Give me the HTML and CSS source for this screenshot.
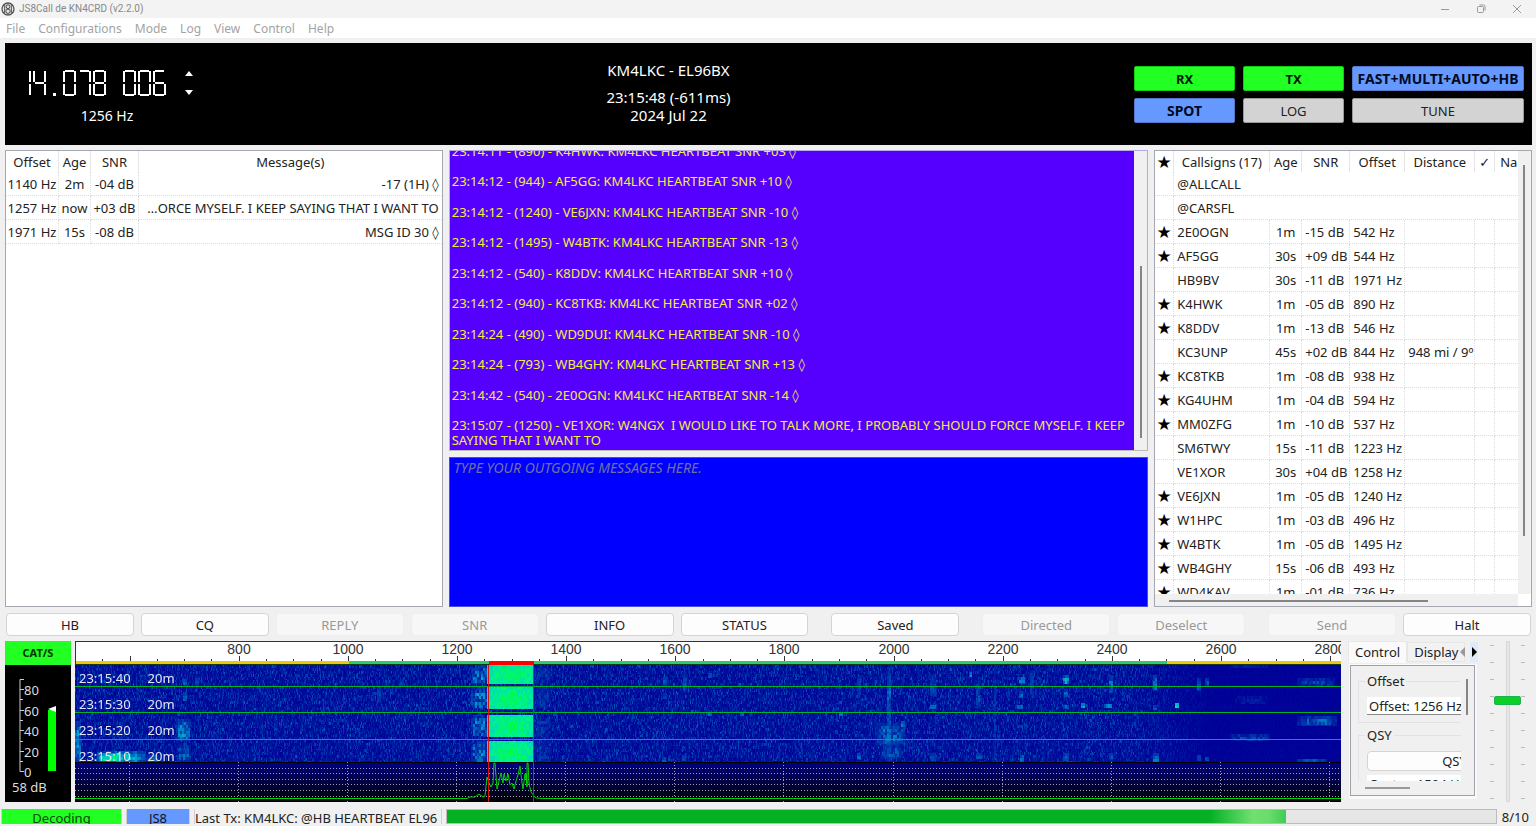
FILE: index.html
```html
<!DOCTYPE html>
<html lang="en">
<head>
<meta charset="utf-8">
<title>JS8Call de KN4CRD (v2.2.0)</title>
<link rel="stylesheet" href="styles.css">
</head>
<body>
<header class="titlebar">
  <svg class="logo" width="14" height="14" viewBox="0 0 14 14" aria-hidden="true"><circle cx="7" cy="7" r="6" fill="#e4e4e4" stroke="#555" stroke-width="1.3"/><circle cx="7" cy="4.7" r="1.9" fill="none" stroke="#444"/><circle cx="7" cy="9.2" r="2.2" fill="none" stroke="#444"/><path d="M3.6 3v8M10.4 3v8" stroke="#666" stroke-width="1.1"/></svg>
  <h1>JS8Call de KN4CRD (v2.2.0)</h1>
  <div class="window-buttons">
    <button aria-label="Minimize"><svg width="10" height="10" viewBox="0 0 10 10"><path d="M1 5.5h8"/></svg></button>
    <button aria-label="Restore"><svg width="10" height="10" viewBox="0 0 10 10"><rect x="1.5" y="2.5" width="6" height="6" rx="1"/><path d="M3.5 1h4q1.500 0 1.500 1.500v4"/></svg></button>
    <button aria-label="Close"><svg width="10" height="10" viewBox="0 0 10 10"><path d="M1 1l8 8M9 1l-8 8"/></svg></button>
  </div>
</header>
<nav class="menubar">
  <button>File</button><button>Configurations</button><button>Mode</button><button>Log</button><button>View</button><button>Control</button><button>Help</button>
</nav>

<section class="station">
  <div class="dial">
    <div class="dial-row">
      <output class="lcd"><span class="seg n1">1</span><span class="seg n4">4</span><span class="seg dot">.</span><span class="seg n0">0</span><span class="seg n7">7</span><span class="seg n8">8</span><span class="seg"> </span><span class="seg n0">0</span><span class="seg n0">0</span><span class="seg n6">6</span></output>
      <div class="steps"><button class="up" aria-label="Band up"></button><button class="down" aria-label="Band down"></button></div>
    </div>
    <div class="offset">1256 Hz</div>
  </div>
  <div class="clock">
    <div class="call">KM4LKC - EL96BX</div>
    <div>23:15:48 (-611ms)</div>
    <div>2024 Jul 22</div>
  </div>
  <div class="modes">
    <button class="green">RX</button><button class="green">TX</button><button class="blue">FAST+MULTI+AUTO+HB</button>
    <button class="blue">SPOT</button><button>LOG</button><button>TUNE</button>
  </div>
</section>

<main class="work">
  <section class="pane">
    <table class="grid activity">
      <colgroup><col class="w-off"><col class="w-age"><col class="w-snr"><col></colgroup>
      <thead><tr><th>Offset</th><th>Age</th><th>SNR</th><th>Message(s)</th></tr></thead>
      <tbody>
        <tr><td>1140 Hz</td><td>2m</td><td>-04 dB</td><td>-17 (1H) ◊</td></tr>
        <tr><td>1257 Hz</td><td>now</td><td>+03 dB</td><td>…ORCE MYSELF. I KEEP SAYING THAT I WANT TO</td></tr>
        <tr><td>1971 Hz</td><td>15s</td><td>-08 dB</td><td>MSG ID 30 ◊</td></tr>
      </tbody>
    </table>
  </section>

  <section class="chat">
    <div class="log">
      <div class="log-lines">
        <p>23:14:11 - (890) - K4HWK: KM4LKC HEARTBEAT SNR +03 ◊</p>
        <p>23:14:12 - (944) - AF5GG: KM4LKC HEARTBEAT SNR +10 ◊</p>
        <p>23:14:12 - (1240) - VE6JXN: KM4LKC HEARTBEAT SNR -10 ◊</p>
        <p>23:14:12 - (1495) - W4BTK: KM4LKC HEARTBEAT SNR -13 ◊</p>
        <p>23:14:12 - (540) - K8DDV: KM4LKC HEARTBEAT SNR +10 ◊</p>
        <p>23:14:12 - (940) - KC8TKB: KM4LKC HEARTBEAT SNR +02 ◊</p>
        <p>23:14:24 - (490) - WD9DUI: KM4LKC HEARTBEAT SNR -10 ◊</p>
        <p>23:14:24 - (793) - WB4GHY: KM4LKC HEARTBEAT SNR +13 ◊</p>
        <p>23:14:42 - (540) - 2E0OGN: KM4LKC HEARTBEAT SNR -14 ◊</p>
        <p>23:15:07 - (1250) - VE1XOR: W4NGX&nbsp; I WOULD LIKE TO TALK MORE, I PROBABLY SHOULD FORCE MYSELF. I KEEP SAYING THAT I WANT TO</p>
      </div>
      <div class="log-bar"><span></span></div>
    </div>
    <textarea class="compose" aria-label="Outgoing message" placeholder="TYPE YOUR OUTGOING MESSAGES HERE."></textarea>
  </section>

  <section class="pane heard">
    <div class="heard-view">
      <table class="grid calls">
        <colgroup><col class="w-star"><col class="w-call"><col class="w-age"><col class="w-snr"><col class="w-hz"><col class="w-dist"><col class="w-tick"><col></colgroup>
        <thead><tr><th>★</th><th>Callsigns (17)</th><th>Age</th><th>SNR</th><th>Offset</th><th>Distance</th><th>✓</th><th>Name</th></tr></thead>
        <tbody>
          <tr><td></td><td colspan="7">@ALLCALL</td></tr>
          <tr><td></td><td colspan="7">@CARSFL</td></tr>
          <tr><td>★</td><td>2E0OGN</td><td>1m</td><td>-15 dB</td><td>542 Hz</td><td></td><td></td><td></td></tr>
          <tr><td>★</td><td>AF5GG</td><td>30s</td><td>+09 dB</td><td>544 Hz</td><td></td><td></td><td></td></tr>
          <tr><td></td><td>HB9BV</td><td>30s</td><td>-11 dB</td><td>1971 Hz</td><td></td><td></td><td></td></tr>
          <tr><td>★</td><td>K4HWK</td><td>1m</td><td>-05 dB</td><td>890 Hz</td><td></td><td></td><td></td></tr>
          <tr><td>★</td><td>K8DDV</td><td>1m</td><td>-13 dB</td><td>546 Hz</td><td></td><td></td><td></td></tr>
          <tr><td></td><td>KC3UNP</td><td>45s</td><td>+02 dB</td><td>844 Hz</td><td>948 mi / 9º</td><td></td><td></td></tr>
          <tr><td>★</td><td>KC8TKB</td><td>1m</td><td>-08 dB</td><td>938 Hz</td><td></td><td></td><td></td></tr>
          <tr><td>★</td><td>KG4UHM</td><td>1m</td><td>-04 dB</td><td>594 Hz</td><td></td><td></td><td></td></tr>
          <tr><td>★</td><td>MM0ZFG</td><td>1m</td><td>-10 dB</td><td>537 Hz</td><td></td><td></td><td></td></tr>
          <tr><td></td><td>SM6TWY</td><td>15s</td><td>-11 dB</td><td>1223 Hz</td><td></td><td></td><td></td></tr>
          <tr><td></td><td>VE1XOR</td><td>30s</td><td>+04 dB</td><td>1258 Hz</td><td></td><td></td><td></td></tr>
          <tr><td>★</td><td>VE6JXN</td><td>1m</td><td>-05 dB</td><td>1240 Hz</td><td></td><td></td><td></td></tr>
          <tr><td>★</td><td>W1HPC</td><td>1m</td><td>-03 dB</td><td>496 Hz</td><td></td><td></td><td></td></tr>
          <tr><td>★</td><td>W4BTK</td><td>1m</td><td>-05 dB</td><td>1495 Hz</td><td></td><td></td><td></td></tr>
          <tr><td>★</td><td>WB4GHY</td><td>15s</td><td>-06 dB</td><td>493 Hz</td><td></td><td></td><td></td></tr>
          <tr><td>★</td><td>WD4KAV</td><td>1m</td><td>-01 dB</td><td>736 Hz</td><td></td><td></td><td></td></tr>
        </tbody>
      </table>
    </div>
    <div class="vbar"><span></span></div>
    <div class="hbar"><span></span></div>
  </section>
</main>

<div class="actions">
  <button>HB</button><button>CQ</button><button disabled>REPLY</button><button disabled>SNR</button><button>INFO</button><button>STATUS</button>
  <button class="apart">Saved</button><button class="apart" disabled>Directed</button><button disabled>Deselect</button>
  <button class="apart" disabled>Send</button><button>Halt</button>
</div>

<section class="scope">
  <div class="meter">
    <button class="cat">CAT/S</button>
    <svg class="scale" width="66" height="114" role="img" aria-label="Signal level">
      <path d="M19 14.500h-4v92h4M15 24.500h4M15 34.500h3M15 45.500h4M15 55.500h3M15 65.500h4M15 76.500h3M15 86.500h4M15 96.500h3" fill="none" stroke="#ccc"/>
      <rect x="43" y="45" width="8" height="61" fill="#0f0"/>
      <path d="M51 41v6l-8-3z" fill="#fff"/>
      <g class="scale-text"><text x="19" y="30">80</text><text x="19" y="51">60</text><text x="19" y="71">40</text><text x="19" y="92">20</text><text x="19" y="112">0</text></g>
    </svg>
    <div class="level">58 dB</div>
  </div>

  <div class="plot">
    <svg class="ruler" id="ruler" width="100%" height="24"></svg>
    <div class="fall">
      <canvas id="fall" width="1266" height="137"></canvas>
      <div class="stamps">
        <div><span>23:15:40</span><span>20m</span></div>
        <div><span>23:15:30</span><span>20m</span></div>
        <div><span>23:15:20</span><span>20m</span></div>
        <div><span>23:15:10</span><span>20m</span></div>
      </div>
    </div>
  </div>

  <div class="side">
    <div class="tabs"><button class="tab on">Control</button><button class="tab">Display</button><button class="tab-prev" aria-label="Previous tabs"></button><button class="tab-next" aria-label="Next tabs"></button></div>
    <div class="sheet">
      <div class="frame">
        <div class="view">
          <fieldset><legend>Offset</legend><input aria-label="Offset" value="Offset: 1256 Hz"></fieldset>
          <fieldset><legend>QSY</legend><button class="qsy">QSY</button><input aria-label="Center" value="Center: 1504 Hz"></fieldset>
        </div>
        <div class="view-v"><span></span></div>
        <div class="view-h"><span></span></div>
      </div>
    </div>
  </div>

  <div class="gain"><input type="range" min="0" max="100" value="64" aria-label="Transmit power"></div>
</section>

<footer class="status">
  <div class="cell decoding">Decoding</div>
  <div class="cell js8">JS8</div>
  <div class="cell last">Last Tx: KM4LKC: @HB HEARTBEAT EL96</div>
  <progress value="8" max="10" aria-label="Period"></progress>
  <div class="count">8/10</div>
</footer>
<script src="scope.js"></script>
</body>
</html>
```
FILE: styles.css
```css
* { box-sizing: border-box; }
body {
  margin: 0; height: 100vh; overflow: hidden;
  display: flex; flex-direction: column;
  background: #f0f0f0; color: #222;
  font: 13px/16px "Noto Sans", "DejaVu Sans", sans-serif;
}
button, input, textarea { font: inherit; color: inherit; margin: 0; padding: 0; border: 0; background: none; border-radius: 0; }
p, h1 { margin: 0; font: inherit; }

.titlebar { display: flex; align-items: center; height: 18px; padding: 0 10px 0 1px; background: #f3f3f3; }
.titlebar h1 { flex: 1; margin-left: 4px; font: 10px/18px Roboto, "Noto Sans", sans-serif; color: #888; }
.window-buttons { display: flex; gap: 26px; padding-right: 4px; }
.window-buttons button { display: flex; width: 10px; }
.window-buttons svg { fill: none; stroke: #999; }
.menubar { display: flex; gap: 13px; height: 20px; padding: 0 6px; background: #fff; color: #a3a3a3; font-size: 12px; line-height: 22px; }

.station { display: flex; height: 102px; margin: 5px 4px 5px 5px; background: #000; color: #fff; font-size: 14px; }
.dial { width: 204px; padding-top: 27px; text-align: center; }
.dial-row { display: flex; align-items: center; gap: 19px; padding-left: 13px; }
.lcd { display: flex; gap: 2px; height: 26px; }
.seg {
  width: 13px; height: 26px; color: transparent; font-size: 12px;
  background:
    linear-gradient(var(--a, #0000) 0 0) 2px 0 / 9px 2px,
    linear-gradient(var(--g, #0000) 0 0) 2px 12px / 9px 2px,
    linear-gradient(var(--d, #0000) 0 0) 2px 24px / 9px 2px,
    linear-gradient(var(--f, #0000) 0 0) 0 1px / 2px 11px,
    linear-gradient(var(--e, #0000) 0 0) 0 14px / 2px 11px,
    linear-gradient(var(--b, #0000) 0 0) 11px 1px / 2px 11px,
    linear-gradient(var(--c, #0000) 0 0) 11px 14px / 2px 11px,
    linear-gradient(var(--p, #0000) 0 0) 5px 23px / 3px 3px;
  background-repeat: no-repeat;
}
.n1 { --b: #fff; --c: #fff; }
.n4 { --b: #fff; --c: #fff; --f: #fff; --g: #fff; }
.n0 { --a: #fff; --b: #fff; --c: #fff; --d: #fff; --e: #fff; --f: #fff; }
.n7 { --a: #fff; --b: #fff; --c: #fff; }
.n8 { --a: #fff; --b: #fff; --c: #fff; --d: #fff; --e: #fff; --f: #fff; --g: #fff; }
.n6 { --a: #fff; --c: #fff; --d: #fff; --e: #fff; --f: #fff; --g: #fff; }
.dot { --p: #fff; }
.steps { display: grid; gap: 14px; }
.steps button { border: 4px solid transparent; }
.steps .up { border-bottom: 5px solid #fff; border-top: 0; }
.steps .down { border-top: 5px solid #fff; border-bottom: 0; }
.offset { margin-top: 10px; line-height: 20px; }
.clock { flex: 1; padding-top: 18px; text-align: center; font-size: 15px; line-height: 18px; }
.call { margin-bottom: 9px; }
.modes { display: grid; grid-template-columns: 101px 101px 172px; grid-auto-rows: 25px; gap: 7px 8px; width: 404px; padding: 23px 8px 0 0; justify-content: end; }
.modes button { background: #d3d3d3; color: #222; border: 1px solid #999; border-radius: 2px; font-size: 13px; white-space: nowrap; }
.modes .green { background: #22ff22; border-color: #1c1; color: #001a00; font-weight: bold; }
.modes .blue { background: #6699ff; border-color: #57c; color: #000a22; font-weight: bold; font-size: 14px; }

.work { flex: 1; min-height: 0; display: grid; grid-template-columns: 438fr 700fr 378fr; gap: 6px; padding: 0 4px 0 5px; }
.pane { min-width: 0; min-height: 0; border: 1px solid #a5a8b0; background: #fff; overflow: hidden; }
.grid { width: 100%; table-layout: fixed; border-collapse: separate; border-spacing: 0; }
.grid th { height: 21px; padding: 0; font-weight: normal; border-right: 1px solid #e5e5e5; white-space: nowrap; overflow: hidden; }
.grid td { height: 24px; padding: 0; white-space: nowrap; border-right: 1px dotted #ddd; border-bottom: 1px dotted #ddd; overflow: hidden; }
.grid th:last-child, .grid td:last-child { border-right: 0; }
.w-off { width: 53px; }
.w-age { width: 32px; }
.w-snr { width: 48px; }
.w-star { width: 19px; }
.w-call { width: 96px; }
.w-hz { width: 55px; }
.w-dist { width: 70px; }
.w-tick { width: 20px; }
.activity td { text-align: center; }
.activity td:last-child { text-align: right; padding-right: 3px; }
.calls td { padding-left: 3px; }
.calls td:first-child { padding: 0; text-align: center; }
.calls td:nth-child(3) { padding: 0; text-align: center; }
.calls td:first-child, .calls th:first-child { font-size: 17px; color: #000; font-family: "DejaVu Sans", sans-serif; }
.calls th:last-child { text-align: left; padding-left: 5px; }

.chat { display: grid; grid-template-rows: 301fr 150fr; gap: 6px; min-width: 0; min-height: 0; }
.log { display: flex; min-height: 0; border: 1px solid #b9a8e8; border-bottom-color: #bbb; overflow: hidden; }
.log-lines { flex: 1; display: flex; flex-direction: column; justify-content: space-between; background: #5500ff; color: #f0f03c; line-height: 15px; padding: 0 2px; overflow: hidden; }
.log-lines p:first-child { margin-top: -7px; }
.log-lines p:last-child { margin-bottom: 2px; }
.log-bar { width: 13px; background: #f0f0f0; display: flex; flex-direction: column; justify-content: flex-end; align-items: center; padding-bottom: 12px; }
.log-bar span { width: 2px; height: 60%; background: #858585; }
.compose { width: 100%; height: 100%; resize: none; background: #0000ff; color: #fff; border: 1px solid #4a4adf; padding: 2px 4px; display: block; outline: 0; font-size: 14px; }
.compose::placeholder { color: #7070a8; font-style: italic; opacity: 1; }

.heard { display: grid; grid-template: 1fr 12px / 1fr 13px; }
.heard-view { min-height: 0; min-width: 0; overflow: hidden; }
.vbar { background: #f0f0f0; padding: 14px 6px 58px 5px; display: flex; }
.vbar span { flex: 1; background: #858585; }
.hbar { background: #f0f0f0; padding: 6px 90px 4px 14px; display: flex; }
.hbar span { flex: 1; background: #858585; }

.actions { display: flex; gap: 7px; padding: 6px 5px 5px 6px; }
.actions button { flex: 1; height: 23px; background: #fdfdfd; border: 1px solid #d4d4d4; border-radius: 4px; }
.actions button:disabled { background: #f7f7f7; border-color: #eee; color: #999; }
.actions .apart { margin-left: 16px; }

.scope { display: flex; height: 161px; padding-left: 5px; }
.meter { width: 66px; background: #000; color: #ddd; }
.cat { display: block; width: 100%; height: 24px; background: #22ff22; color: #003300; font-size: 11px; font-weight: bold; }
.scale { display: block; }
.scale-text { fill: #ddd; font-size: 13px; }
.level { padding-left: 7px; }
.plot { flex: 1; min-width: 0; margin-left: 4px; display: flex; flex-direction: column; }
.ruler { display: block; background: #fff; border-top: 1px solid #333; border-left: 1px solid #333; font: 14px "Liberation Sans", Arial, sans-serif; fill: #333; }
.fall { position: relative; height: 137px; }
.fall canvas { display: block; width: 100%; height: 137px; }
.stamps { position: absolute; inset: 0 0 40px; padding: 0 4px; overflow: hidden; color: #e4e4f4; font-size: 13px; line-height: 27px; }
.stamps div { display: flex; gap: 17px; height: 26px; }
.side { width: 130px; margin-left: 7px; overflow: hidden; }
.tabs { display: flex; align-items: center; height: 22px; }
.tab { height: 20px; padding: 0 6px; background: #f2f2f2; border: 1px solid #e6e6e6; }
.tab.on { height: 22px; background: #fafafa; border-color: #e8e8e8 #e8e8e8 transparent; }
.tab-prev { border: 5px solid transparent; border-right-color: #999; border-left: 0; margin-left: -5px; }
.tab-next { height: 20px; width: 13px; margin-left: 5px; background: #dcecfa; display: flex; align-items: center; justify-content: center; }
.tab-next::before { content: ""; border: 5px solid transparent; border-left-color: #000; border-right: 0; }
.sheet { height: 137px; padding: 1px 2px 3px 1px; background: #fafafa; border: 1px solid #eee; }
.frame { height: 100%; display: grid; grid-template: 1fr 14px / 1fr 13px; background: #f0f0f0; border: 1px solid #a0a0a8; }
.view { min-width: 0; min-height: 0; overflow: hidden; padding-left: 7px; }
.view fieldset { width: 194px; margin: 7px 0 0; padding: 0 9px 7px 8px; border: 1px solid #e2e2e2; }
.view fieldset + fieldset { margin-top: 4px; }
.view legend { padding: 0 2px; margin-left: -2px; }
.view input { display: block; width: 100%; height: 18px; padding-left: 2px; margin-top: 8px; background: #fff; border-bottom: 1px solid #888; }
.view .qsy { display: block; width: 100%; height: 20px; margin-top: 8px; background: #fdfdfd; border: 1px solid #d4d4d4; border-radius: 4px; }
.view .qsy + input { margin-top: 4px; }
.view-v { padding: 13px 5px; }
.view-v span { display: block; width: 2px; height: 36px; background: #858585; }
.view-h { padding: 6px 14px; }
.view-h span { display: block; width: 45px; height: 2px; background: #999; }
.gain {
  width: 58px; display: flex; justify-content: center; padding-left: 1px;
  background:
    repeating-linear-gradient(#bbb 0 1px, transparent 1px 17px) 12px 4px / 4px 154px no-repeat,
    repeating-linear-gradient(#bbb 0 1px, transparent 1px 17px) 43px 4px / 4px 154px no-repeat;
}
.gain input { -webkit-appearance: none; appearance: none; writing-mode: vertical-lr; direction: rtl; width: 27px; height: 161px; }
.gain input::-webkit-slider-runnable-track { width: 4px; height: 100%; background: #e6e6e6; border: 1px solid #d8d8d8; }
.gain input::-webkit-slider-thumb { -webkit-appearance: none; width: 27px; height: 9px; margin-left: -13px; margin-right: -12px; background: #0bd028; border: 1px solid #1db24a; border-radius: 2px; }

.status { display: flex; height: 24px; padding: 7px 7px 2px 1px; }
.cell { height: 15px; overflow: hidden; text-align: center; line-height: 18px; border: 1px solid #d0d0d0; border-top: 0; border-bottom: 0; white-space: nowrap; }
.decoding { width: 121px; background: #22ff22; color: #064d06; }
.js8 { width: 64px; margin-left: 4px; background: #6699ff; color: #112; }
.last { width: 248px; margin-left: 4px; text-align: left; }
.status progress { -webkit-appearance: none; appearance: none; flex: 1; height: 15px; margin-left: 4px; border: 1px solid #bbb; }
progress::-webkit-progress-bar { background: #e6e6e6; }
progress::-webkit-progress-value { background: linear-gradient(90deg, #06b025 91%, #70e070 96%, #6bdc6b 98%, #3fcb55); }
.count { width: 32px; text-align: right; line-height: 18px; margin-top: -1px; }
```
FILE: scope.js
```js
// Frequency ruler: 500 Hz at the left edge, 200 Hz every 109 pixels.
const PX_PER_HZ = 0.5457;
const toX = hz => Math.round((hz - 500) * PX_PER_HZ);
const ruler = document.getElementById('ruler');
let marks = '';
for (let hz = 550; hz <= 3200; hz += 50) {
  const x = toX(hz) - 1;
  const major = hz % 200 === 0;
  marks += `<rect x="${x}" y="${major ? 14 : 17}" width="1" height="${major ? 5 : 2}"/>`;
  if (major && hz > 600) marks += `<text x="${x}" y="12" text-anchor="middle">${hz}</text>`;
}
const band = (a, b, color) => `<rect x="${toX(a)}" y="19" width="${toX(b) - toX(a)}" height="3" fill="${color}"/>`;
marks += band(500, 1000, '#f1c40f') + band(1000, 2500, '#2ecc71') + band(2500, 3500, '#f1c40f');
marks += `<rect x="0" y="22" width="100%" height="1" fill="#103a20"/>`;
marks += `<rect x="${toX(1256)}" y="19" width="${toX(1339) - toX(1256)}" height="4" fill="#ff0000"/>`;
ruler.innerHTML = marks;

const canvas = document.getElementById('fall');
const ctx = canvas.getContext('2d');
const W = canvas.width, FALL = 97, H = canvas.height;
let seed = 12345;
const rnd = () => (seed = (seed * 1664525 + 1013904223) >>> 0) / 4294967296;

const level = new Float32Array(W * FALL);
for (let x = 0; x < W; x++) {
  const amp = x < 1050 ? 0.32 : Math.max(0.03, 0.32 - (x - 1050) / 300);
  let v = 0;
  for (let y = 0; y < FALL; y++) {
    if (y % 3 === 0 || rnd() < 0.2) v = Math.pow(rnd(), 3) * amp + rnd() * amp * 0.2;
    level[y * W + x] = v;
  }
}
// Patch of signal with a mottled texture, cells of two by three pixels.
function patch(x0, y0, w, h, strength, mottle, solid) {
  for (let y = y0; y < y0 + h; y += 3) for (let x = x0; x < x0 + w; x += 2) {
    const fx = Math.min(x - x0 + 1, x0 + w - x) / (w / 2), fy = Math.min(y - y0 + 1, y0 + h - y) / (h / 2);
    const edge = solid ? 0.86 + 0.14 * Math.min(1, fx + 0.1) * Math.min(1, fy + 0.3) : Math.min(1, 0.45 + fx) * Math.min(1, 0.45 + fy);
    const s = strength * edge * (1 - mottle * rnd());
    for (let j = 0; j < 3; j++) for (let i = 0; i < 2; i++) {
      const px = x + i, py = y + j;
      if (px < W && py < Math.min(FALL, y0 + h)) level[py * W + px] = Math.max(level[py * W + px], s);
    }
  }
}
for (const [y, h] of [[0, 19], [22, 22], [50, 22], [76, 21]]) {
  patch(412, y, 46, h, 1, 0.16, true);
  patch(396, y, 16, h, 0.62, 0.85);
  patch(458, y, 18, h, 0.3, 0.9);
}
[[0,56,6,41,.65,.6],[22,86,48,11,.8,.5],[22,88,24,8,.95,.3],[70,90,14,7,.5,.5],[101,54,14,22,.62,.6],[102,80,13,17,.5,.7],
 [108,14,3,6,.5,.3],[108,28,3,8,.45,.3],[120,10,3,12,.35,.5],[302,22,4,16,.4,.5],[325,14,3,8,.3,.4],
 [588,12,3,8,.4,.4],[608,10,4,16,.4,.5],[588,28,3,6,.35,.4],[633,8,3,5,.4,.3],[633,47,3,4,.5,.3],[665,47,3,4,.5,.3],[764,47,3,4,.5,.3],
 [587,92,4,5,.4,.3],[607,90,4,6,.4,.3],[782,10,4,20,.4,.6],[782,88,4,7,.5,.5],
 [812,2,3,95,.48,.6],[800,58,30,22,.5,.7],[806,80,22,14,.42,.7],[826,56,3,6,.5,.4],
 [855,10,5,22,.4,.6],[855,40,5,4,.55,.3],[855,88,5,8,.4,.4],[895,7,2,5,.65,.3],[901,16,4,28,.45,.6],[901,88,5,6,.42,.4],
 [919,0,2,97,.28,.6],[944,12,5,7,.7,.4],[944,26,4,7,.6,.4],[940,40,8,4,.5,.4],[945,90,4,7,.6,.4],[955,5,3,26,.35,.6],
 [988,10,5,9,.7,.4],[989,24,4,8,.5,.4],[988,40,5,4,.5,.4],[988,88,5,8,.5,.4],[1006,38,3,5,.7,.3],[1029,39,8,4,.6,.3],
 [1034,10,4,18,.5,.6],[1034,88,4,7,.4,.4],[1078,10,4,16,.52,.5],[1078,40,4,5,.4,.4],[1078,88,5,9,.55,.4],[1100,38,4,5,.85,.2],
 [1122,13,4,13,.42,.5],[1130,13,3,9,.42,.5],[1122,90,4,6,.4,.4],[1130,92,3,4,.4,.4],[1155,0,38,3,.22,.9],
 [1222,13,38,9,.36,.8],[1222,51,40,10,.48,.7],[1155,69,40,7,.38,.8],[1160,31,32,8,.18,.9],[1222,94,30,3,.4,.7]
].forEach(p => patch(...p));

const stops = [[0, 0, 0, 150], [.3, 0, 64, 176], [.55, 0, 150, 205], [.75, 0, 215, 190], [.88, 0, 245, 130], [1, 0, 252, 50]];
const img = ctx.createImageData(W, FALL);
level.forEach((v, n) => {
  let k = 1;
  while (k < stops.length - 1 && v > stops[k][0]) k++;
  const a = stops[k - 1], b = stops[k], t = Math.min(1, (v - a[0]) / (b[0] - a[0]));
  for (let c = 0; c < 3; c++) img.data[n * 4 + c] = a[c + 1] + (b[c + 1] - a[c + 1]) * t;
  img.data[n * 4 + 3] = 255;
});
ctx.putImageData(img, 0, 0);
ctx.fillStyle = '#00b428';
[21, 47, 74].forEach(y => ctx.fillRect(0, y, W, 1));

// Spectrum below the waterfall.
const sky = ctx.createLinearGradient(0, FALL, 0, H);
sky.addColorStop(0, '#000084');
sky.addColorStop(1, '#000000');
ctx.fillStyle = sky;
ctx.fillRect(0, FALL, W, H - FALL);
ctx.fillStyle = '#000';
ctx.fillRect(0, FALL, W, 1);
ctx.strokeStyle = '#a0a0b8';
ctx.setLineDash([1, 2]);
ctx.beginPath();
[103, 108, 114, 119, 125, 131].forEach(y => { ctx.moveTo(0, y + .5); ctx.lineTo(W, y + .5); });
for (let hz = 600; hz < 3000; hz += 200) { ctx.moveTo(toX(hz) - .5, FALL); ctx.lineTo(toX(hz) - .5, H); }
ctx.stroke();
ctx.setLineDash([]);
ctx.strokeStyle = '#00d400';
ctx.beginPath();
const trace = [[0,133.5],[392,133.5],[395,132],[400,132],[404,129],[408,132],[410,131],[412,112],[414,118],[416,122],[418,118],[419,98],[420,98],[422,124],[424,116],[426,108],[428,118],[429,109],[431,116],[433,109],[435,120],[437,118],[439,124],[441,116],[443,110],[445,101],[447,118],[448,124],[450,109],[452,118],[451,108],[452,122],[452,98],[453,98],[454,118],[456,127],[459,131],[461,133],[468,133.5],[W,133.5]];
trace.forEach(([x, y]) => ctx.lineTo(x, y));
ctx.stroke();
ctx.fillStyle = '#e01010';
[1256, 1339].forEach(hz => ctx.fillRect(toX(hz), 0, 1, H));
```
